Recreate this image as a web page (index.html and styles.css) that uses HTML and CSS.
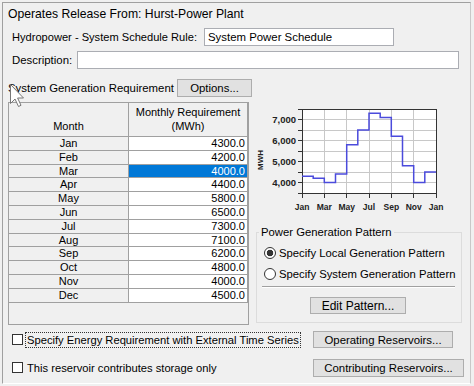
FILE: index.html
```html
<!DOCTYPE html>
<html lang="en">
  <head>
    <meta charset="UTF-8" />
    <title>Hydropower - System Schedule Rule</title>
    <link rel="stylesheet" href="styles.css">
  </head>
  <body>
    <div class="panel">
      <div class="title">Operates Release From: Hurst-Power Plant</div>
      <div class="row rule-row">
        <span class="rule-lbl">Hydropower - System Schedule Rule:</span>
        <input class="field rule-field" type="text" value="System Power Schedule" />
      </div>
      <div class="row desc-row">
        <span class="desc-lbl">Description:</span>
        <input class="field desc-field" type="text" />
      </div>
      <div class="row req-row">
        <span class="req-lbl">System Generation Requirement</span>
        <button class="btn options-btn">Options...</button>
      </div>

      <div class="main">
        <div class="table-box">
          <div class="grid">
            <div class="hcell">Month</div>
            <div class="hcell">Monthly Requirement<br />(MWh)</div>
            <div class="mcell">Jan</div><div class="vcell">4300.0</div>
            <div class="mcell">Feb</div><div class="vcell">4200.0</div>
            <div class="mcell">Mar</div><div class="vcell selected">4000.0</div>
            <div class="mcell">Apr</div><div class="vcell">4400.0</div>
            <div class="mcell">May</div><div class="vcell">5800.0</div>
            <div class="mcell">Jun</div><div class="vcell">6500.0</div>
            <div class="mcell">Jul</div><div class="vcell">7300.0</div>
            <div class="mcell">Aug</div><div class="vcell">7100.0</div>
            <div class="mcell">Sep</div><div class="vcell">6200.0</div>
            <div class="mcell">Oct</div><div class="vcell">4800.0</div>
            <div class="mcell">Nov</div><div class="vcell">4000.0</div>
            <div class="mcell">Dec</div><div class="vcell">4500.0</div>
          </div>
        </div>

        <div class="side">
          <svg class="chart" width="220" height="113" viewBox="0 0 220 113">
            <rect x="52" y="7" width="134" height="84" fill="#fff" />
            <g stroke="#c8c8c8" stroke-width="1" shape-rendering="crispEdges">
              <line x1="52" y1="17.5" x2="186" y2="17.5" />
              <line x1="52" y1="28" x2="186" y2="28" />
              <line x1="52" y1="38.5" x2="186" y2="38.5" />
              <line x1="52" y1="49" x2="186" y2="49" />
              <line x1="52" y1="59.5" x2="186" y2="59.5" />
              <line x1="52" y1="70" x2="186" y2="70" />
              <line x1="52" y1="80.5" x2="186" y2="80.5" />
              <line x1="74.3" y1="7" x2="74.3" y2="91" />
              <line x1="96.7" y1="7" x2="96.7" y2="91" />
              <line x1="119" y1="7" x2="119" y2="91" />
              <line x1="141.3" y1="7" x2="141.3" y2="91" />
              <line x1="163.7" y1="7" x2="163.7" y2="91" />
            </g>
            <g stroke="#333" stroke-width="1" shape-rendering="crispEdges">
              <rect x="52" y="7" width="134" height="84" fill="none" />
              <line x1="48" y1="7" x2="52" y2="7" />
              <line x1="48" y1="17.5" x2="52" y2="17.5" />
              <line x1="48" y1="28" x2="52" y2="28" />
              <line x1="48" y1="38.5" x2="52" y2="38.5" />
              <line x1="48" y1="49" x2="52" y2="49" />
              <line x1="48" y1="59.5" x2="52" y2="59.5" />
              <line x1="48" y1="70" x2="52" y2="70" />
              <line x1="48" y1="80.5" x2="52" y2="80.5" />
              <line x1="48" y1="91" x2="52" y2="91" />
              <line x1="52" y1="91" x2="52" y2="96" />
              <line x1="74.3" y1="91" x2="74.3" y2="96" />
              <line x1="96.7" y1="91" x2="96.7" y2="96" />
              <line x1="119" y1="91" x2="119" y2="96" />
              <line x1="141.3" y1="91" x2="141.3" y2="96" />
              <line x1="163.7" y1="91" x2="163.7" y2="96" />
              <line x1="186" y1="91" x2="186" y2="96" />
            </g>
            <path d="M52 74.2 H63.2 V76.3 H74.3 V80.5 H85.5 V72.1 H96.7 V42.7 H107.8 V28 H119 V11.2 H130.2 V15.4 H141.3 V34.3 H152.5 V63.7 H163.7 V80.5 H174.8 V70 H186"
                  fill="none" stroke="#4b4bdc" stroke-width="1.5" />
            <g class="axis-txt" text-anchor="end">
              <text x="46" y="21">7,000</text>
              <text x="46" y="42">6,000</text>
              <text x="46" y="63">5,000</text>
              <text x="46" y="84">4,000</text>
            </g>
            <text class="unit-txt" x="13" y="58" text-anchor="middle" transform="rotate(-90 13 58)">MWH</text>
            <g class="axis-txt month-txt" text-anchor="middle">
              <text x="52" y="108">Jan</text>
              <text x="74.3" y="108">Mar</text>
              <text x="96.7" y="108">May</text>
              <text x="119" y="108">Jul</text>
              <text x="141.3" y="108">Sep</text>
              <text x="163.7" y="108">Nov</text>
              <text x="186" y="108">Jan</text>
            </g>
          </svg>

          <fieldset class="pattern">
            <legend>Power Generation Pattern</legend>
            <label class="radio-row"><input type="radio" name="pattern" checked />Specify Local Generation Pattern</label>
            <label class="radio-row"><input type="radio" name="pattern" />Specify System Generation Pattern</label>
            <div class="sep"></div>
            <button class="btn edit-btn">Edit Pattern...</button>
          </fieldset>
        </div>
      </div>

      <div class="row check-row first">
        <label class="check-lbl"><input type="checkbox" /><span class="focus">Specify Energy Requirement with External Time Series</span></label>
        <button class="btn operating-btn">Operating Reservoirs...</button>
      </div>
      <div class="row check-row second">
        <label class="check-lbl"><input type="checkbox" /><span class="plain">This reservoir contributes storage only</span></label>
        <button class="btn contributing-btn">Contributing Reservoirs...</button>
      </div>

      <svg class="cursor" width="15" height="24" viewBox="0 0 15 24">
        <path d="M0.5 0.5 V19.5 L5 15 L8.5 22.5 L11 21.3 L7.6 14 H13.5 Z" fill="#fff" stroke="#777" stroke-width="1" />
      </svg>
    </div>
  </body>
</html>
```

FILE: styles.css
```css
* {
  box-sizing: border-box;
}
body {
  margin: 0;
  background-color: #f0f0f0;
  font: 11.4px "Liberation Sans", Arial, sans-serif;
  color: #000;
}
.panel {
  position: relative;
  margin: 2px 0 0 2px;
  width: 469px;
  height: 382px;
  border: 1px solid;
  border-color: #a0a0a0 #c8c8c8 #fff #a0a0a0;
  padding-left: 5px;
}
.title {
  height: 22px;
  line-height: 22px;
  font-size: 12.2px;
}
.row {
  display: flex;
  align-items: center;
}
.field {
  height: 18px;
  border: 1px solid #abadb3;
  background-color: #fff;
  font: inherit;
  padding: 0 3px;
  outline: none;
}
.rule-row {
  margin-top: 3px;
  height: 18px;
}
.rule-lbl {
  width: 196px;
  padding-left: 4px;
  font-size: 11.1px;
  white-space: nowrap;
}
.rule-field {
  width: 190px;
}
.desc-row {
  margin-top: 5px;
  height: 18px;
}
.desc-lbl {
  width: 69px;
  padding-left: 4px;
}
.desc-field {
  width: 382px;
}
.req-row {
  margin-top: 10px;
  height: 18px;
}
.req-lbl {
  width: 169px;
  white-space: nowrap;
}
.btn {
  font: inherit;
  color: #000;
  background-color: #e1e1e1;
  border: 1px solid #adadad;
  padding: 0;
  height: 18px;
}
.options-btn {
  width: 75px;
}
.main {
  display: flex;
  margin-top: 5px;
}
.table-box {
  width: 241px;
  height: 223px;
  border: 1px solid #a0a0a0;
  font-size: 11px;
}
.grid {
  display: grid;
  grid-template-columns: 120px 119px;
  grid-template-rows: 34px repeat(12, 13.8px);
}
.hcell,
.mcell,
.vcell {
  border-right: 1px solid #a0a0a0;
  border-bottom: 1px solid #a0a0a0;
  line-height: 13px;
}
.hcell {
  display: flex;
  flex-direction: column;
  justify-content: flex-end;
  text-align: center;
  line-height: 14px;
  padding-bottom: 3px;
}
.mcell {
  text-align: center;
}
.vcell {
  text-align: right;
  padding-right: 2px;
  background-color: #fff;
}
.vcell.selected {
  background-color: #0078d7;
  color: #fff;
}
.side {
  width: 221px;
  display: flex;
  flex-direction: column;
  align-items: flex-start;
}
.chart {
  display: block;
  margin-left: 1px;
}
.axis-txt {
  font: bold 9.5px "Liberation Sans", Arial, sans-serif;
  fill: #222;
}
.month-txt {
  font-size: 8.5px;
}
.unit-txt {
  font: bold 8px "Liberation Sans", Arial, sans-serif;
  fill: #222;
}
.pattern {
  margin: 10px 0 0 7px;
  width: 206px;
  height: 98px;
  padding: 0;
  border: 1px solid #dcdcdc;
  display: flex;
  flex-direction: column;
  align-items: flex-start;
}
.pattern legend {
  margin-left: 2px;
  padding: 0 2px;
  line-height: 14px;
  font-size: 11.3px;
}
.radio-row {
  display: flex;
  align-items: center;
  height: 15px;
  margin: 6px 0 0 7px;
  font-size: 11.3px;
  white-space: nowrap;
}
.radio-row input {
  appearance: none;
  margin: 0 3px 0 0;
  width: 12px;
  height: 12px;
  border: 1px solid #333;
  border-radius: 50%;
  background-color: #fff;
}
.radio-row input:checked {
  background: radial-gradient(circle, #333 0 3px, #fff 3.6px);
}
.sep {
  margin: 5px 0 0 5px;
  width: 193px;
  border-top: 1px solid #a0a0a0;
  border-bottom: 1px solid #fff;
}
.edit-btn {
  margin: 9px 0 0 53px;
  width: 96px;
  height: 17px;
  font-size: 12px;
}
.check-row {
  height: 19px;
}
.check-row.first {
  margin-top: 5px;
}
.check-row.second {
  margin-top: 9px;
}
.check-lbl {
  display: flex;
  align-items: center;
  width: 305px;
  padding-left: 4px;
  white-space: nowrap;
  font-size: 11.2px;
}
.check-lbl input {
  appearance: none;
  margin: 0 2px 0 0;
  width: 11px;
  height: 11px;
  border: 1px solid #333;
  background-color: #fff;
}
.focus {
  border: 1px dotted #333;
  padding: 0 1px;
  line-height: 14px;
}
.plain {
  padding-left: 2px;
}
.operating-btn {
  width: 140px;
  height: 17px;
}
.contributing-btn {
  width: 151px;
}
.cursor {
  position: absolute;
  left: 7px;
  top: 81px;
}
```
